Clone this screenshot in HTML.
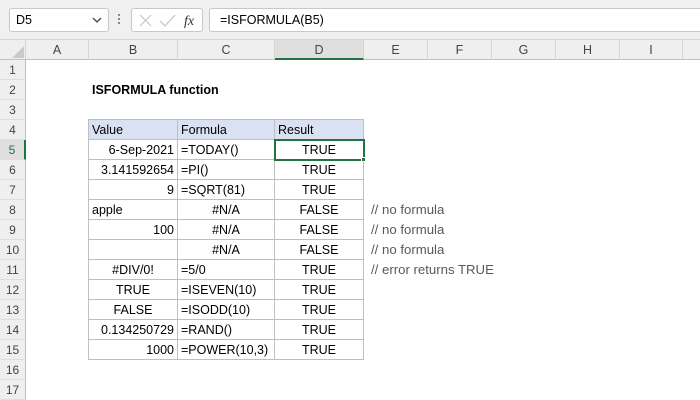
<!DOCTYPE html>
<html><head><style>
*{margin:0;padding:0;box-sizing:border-box}
body{width:700px;height:400px;overflow:hidden;background:#fff;font-family:"Liberation Sans",sans-serif;font-size:12.5px;color:#000;position:relative}
.a{position:absolute}
.ch{position:absolute;top:40px;height:20px;background:#efefef;border-right:1px solid #d4d4d4;border-bottom:1px solid #bfbfbf;text-align:center;line-height:20px;color:#444;font-size:12.5px}
.rh{position:absolute;left:0;width:26px;height:20px;background:#efefef;border-right:1px solid #bfbfbf;border-bottom:1px solid #dedede;text-align:center;line-height:20px;color:#444;font-size:12px}
.c{position:absolute;height:20px;line-height:20px;border-right:1px solid #bfbfbf;border-bottom:1px solid #bfbfbf;padding:0 3px;white-space:nowrap;overflow:hidden}
.r{text-align:right}.m{text-align:center}
.cm{position:absolute;left:371px;height:20px;line-height:20px;color:#595959;font-size:13.2px}
</style></head><body>
<div class="a" style="left:0;top:0;width:700px;height:40px;background:#f0f0f0;border-bottom:1px solid #d4d4d4"></div>
<div class="a" style="left:9px;top:8px;width:100px;height:24px;background:#fff;border:1px solid #c8c8c8;border-radius:3px;line-height:22px;padding-left:6px">D5</div>
<svg class="a" style="left:92px;top:16px" width="10" height="8"><path d="M1 2 L5 6 L9 2" fill="none" stroke="#444" stroke-width="1.3"/></svg>
<div class="a" style="left:118px;top:14px;width:2px;height:2px;background:#888;box-shadow:0 4px #888,0 8px #888"></div>
<div class="a" style="left:131px;top:8px;width:72px;height:24px;background:#fff;border:1px solid #c8c8c8;border-radius:3px"></div>
<svg class="a" style="left:138px;top:13px" width="60" height="16"><path d="M2 2 L13 13 M13 2 L2 13" stroke="#c4c4c4" stroke-width="1.2"/><path d="M22 8 L27 13 L37 2" fill="none" stroke="#c4c4c4" stroke-width="1.2"/><text x="46" y="12" font-family="Liberation Serif" font-style="italic" font-size="14" fill="#333">fx</text></svg>
<div class="a" style="left:209px;top:8px;width:491px;height:24px;background:#fff;border:1px solid #c8c8c8;border-right:none;border-radius:3px 0 0 3px;line-height:22px;padding-left:10px">=ISFORMULA(B5)</div>
<div class="ch" style="left:0;width:26px"></div>
<svg class="a" style="left:12px;top:46px" width="12" height="12"><path d="M12 0 L12 12 L0 12Z" fill="#c9c9c9"/></svg>
<div class="ch" style="left:26px;width:63px">A</div>
<div class="ch" style="left:89px;width:89px">B</div>
<div class="ch" style="left:178px;width:97px">C</div>
<div class="ch" style="left:275px;width:89px;background:#dfdfdf;border-bottom:2px solid #217346">D</div>
<div class="ch" style="left:364px;width:64px">E</div>
<div class="ch" style="left:428px;width:64px">F</div>
<div class="ch" style="left:492px;width:64px">G</div>
<div class="ch" style="left:556px;width:64px">H</div>
<div class="ch" style="left:620px;width:63px">I</div>
<div class="ch" style="left:683px;width:17px;border-right:none"></div>
<div class="rh" style="top:60px">1</div><div class="rh" style="top:80px">2</div><div class="rh" style="top:100px">3</div><div class="rh" style="top:120px">4</div>
<div class="rh" style="top:140px;background:#dfdfdf;border-right:2px solid #217346;color:#217346">5</div>
<div class="rh" style="top:160px">6</div><div class="rh" style="top:180px">7</div><div class="rh" style="top:200px">8</div><div class="rh" style="top:220px">9</div><div class="rh" style="top:240px">10</div><div class="rh" style="top:260px">11</div><div class="rh" style="top:280px">12</div><div class="rh" style="top:300px">13</div><div class="rh" style="top:320px">14</div><div class="rh" style="top:340px">15</div><div class="rh" style="top:360px">16</div><div class="rh" style="top:380px">17</div>
<div class="a" style="left:92px;top:80px;height:20px;line-height:20px;font-weight:bold">ISFORMULA function</div>
<div class="a" style="left:89px;top:119px;width:275px;height:1px;background:#bfbfbf"></div>
<div class="a" style="left:88px;top:119px;width:1px;height:241px;background:#bfbfbf"></div>
<div class="c" style="left:89px;top:120px;width:89px;background:#d9e1f2">Value</div>
<div class="c" style="left:178px;top:120px;width:97px;background:#d9e1f2">Formula</div>
<div class="c" style="left:275px;top:120px;width:89px;background:#d9e1f2">Result</div>

<div class="c r" style="left:89px;top:140px;width:89px">6-Sep-2021</div><div class="c" style="left:178px;top:140px;width:97px">=TODAY()</div><div class="c m" style="left:275px;top:140px;width:89px">TRUE</div>
<div class="c r" style="left:89px;top:160px;width:89px">3.141592654</div><div class="c" style="left:178px;top:160px;width:97px">=PI()</div><div class="c m" style="left:275px;top:160px;width:89px">TRUE</div>
<div class="c r" style="left:89px;top:180px;width:89px">9</div><div class="c" style="left:178px;top:180px;width:97px">=SQRT(81)</div><div class="c m" style="left:275px;top:180px;width:89px">TRUE</div>
<div class="c" style="left:89px;top:200px;width:89px">apple</div><div class="c m" style="left:178px;top:200px;width:97px">#N/A</div><div class="c m" style="left:275px;top:200px;width:89px">FALSE</div>
<div class="c r" style="left:89px;top:220px;width:89px">100</div><div class="c m" style="left:178px;top:220px;width:97px">#N/A</div><div class="c m" style="left:275px;top:220px;width:89px">FALSE</div>
<div class="c r" style="left:89px;top:240px;width:89px"></div><div class="c m" style="left:178px;top:240px;width:97px">#N/A</div><div class="c m" style="left:275px;top:240px;width:89px">FALSE</div>
<div class="c m" style="left:89px;top:260px;width:89px">#DIV/0!</div><div class="c" style="left:178px;top:260px;width:97px">=5/0</div><div class="c m" style="left:275px;top:260px;width:89px">TRUE</div>
<div class="c m" style="left:89px;top:280px;width:89px">TRUE</div><div class="c" style="left:178px;top:280px;width:97px">=ISEVEN(10)</div><div class="c m" style="left:275px;top:280px;width:89px">TRUE</div>
<div class="c m" style="left:89px;top:300px;width:89px">FALSE</div><div class="c" style="left:178px;top:300px;width:97px">=ISODD(10)</div><div class="c m" style="left:275px;top:300px;width:89px">TRUE</div>
<div class="c r" style="left:89px;top:320px;width:89px">0.134250729</div><div class="c" style="left:178px;top:320px;width:97px">=RAND()</div><div class="c m" style="left:275px;top:320px;width:89px">TRUE</div>
<div class="c r" style="left:89px;top:340px;width:89px">1000</div><div class="c" style="left:178px;top:340px;width:97px">=POWER(10,3)</div><div class="c m" style="left:275px;top:340px;width:89px">TRUE</div>
<div class="a" style="left:274px;top:139px;width:91px;height:22px;border:2px solid #217346"></div>
<div class="a" style="left:361px;top:157px;width:5px;height:5px;background:#217346;border:1px solid #fff"></div>
<div class="cm" style="top:200px">// no formula</div>
<div class="cm" style="top:220px">// no formula</div>
<div class="cm" style="top:240px">// no formula</div>
<div class="cm" style="top:260px">// error returns TRUE</div>
</body></html>
